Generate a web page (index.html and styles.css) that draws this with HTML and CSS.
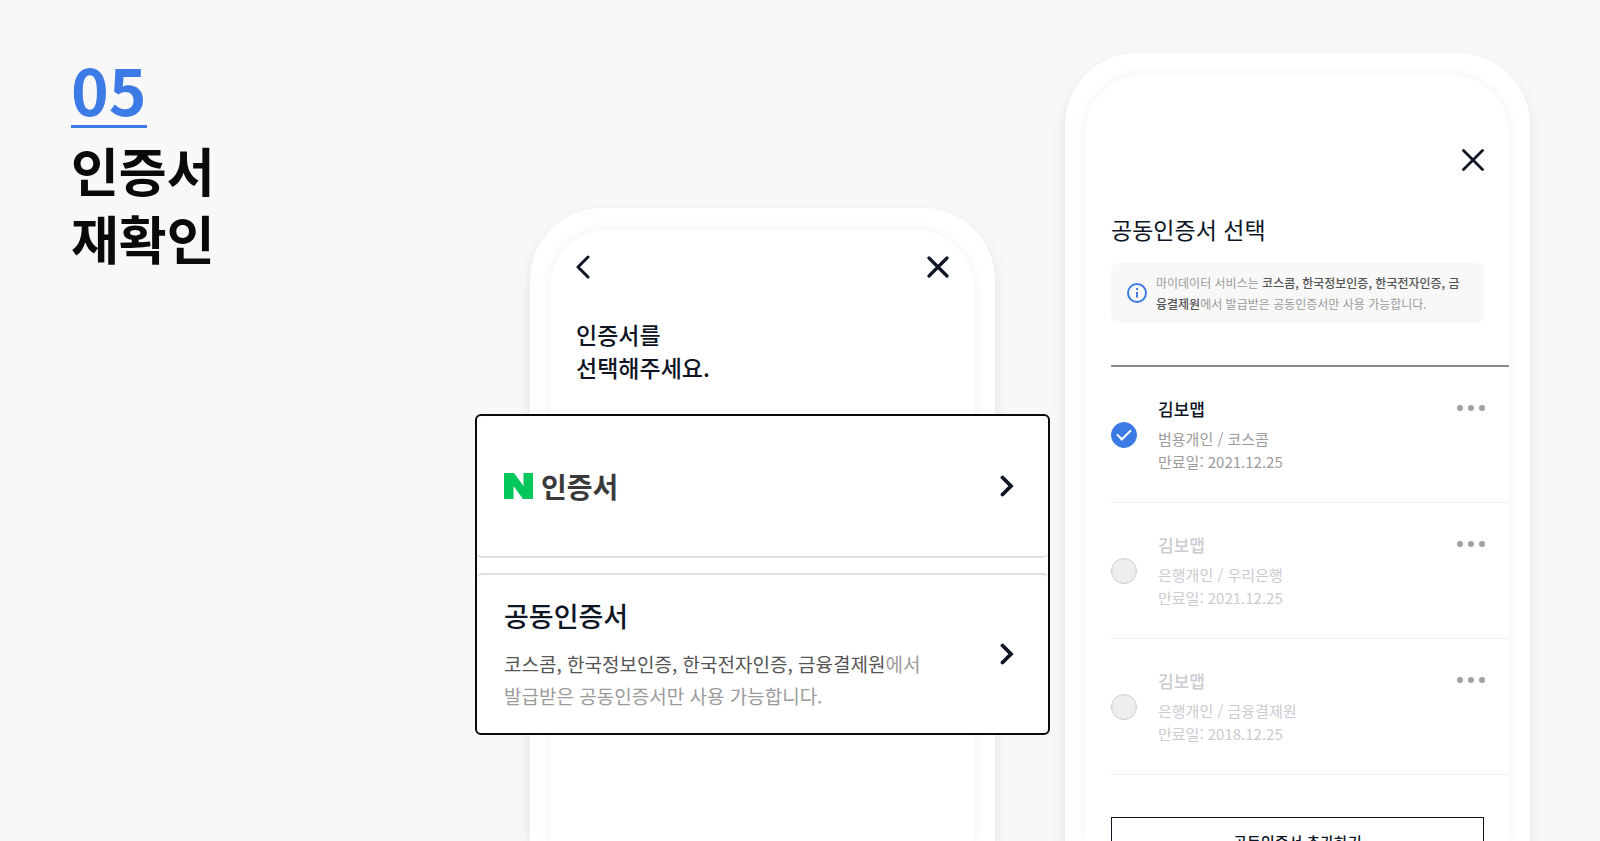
FILE: index.html
```
<!DOCTYPE html>
<html lang="ko">
<head>
    <meta charset="UTF-8">
    <meta name="viewport" content="width=device-width, initial-scale=1.0">
    <title>인증서 재확인</title>
    <link rel="stylesheet" href="styles.css">
</head>
<body>
<main class="scene">
    <header class="step">
        <span class="step-number">05</span>
        <h1 class="step-title">인증서<br>재확인</h1>
    </header>

    <section class="phone phone-select">
        <div class="screen">
            <div class="top-bar">
                <button class="icon-button" type="button" aria-label="뒤로">
                    <svg width="14" height="24" viewBox="0 0 14 24" fill="none" stroke="currentColor" stroke-width="3" stroke-linecap="round" stroke-linejoin="round">
                        <path d="M12 2L2 12l10 10"></path>
                    </svg>
                </button>
                <button class="icon-button" type="button" aria-label="닫기">
                    <svg width="22" height="22" viewBox="0 0 22 22" fill="none" stroke="currentColor" stroke-width="3.2" stroke-linecap="round">
                        <path d="M2 2l18 18M20 2L2 20"></path>
                    </svg>
                </button>
            </div>
            <h2 class="screen-title">인증서를<br>선택해주세요.</h2>

            <nav class="options">
                <a class="option option-naver" href="#">
                    <span class="brand">
                        <svg width="29" height="26" viewBox="0 0 29 26" fill="#03c75a">
                            <path d="M0 0h10l9.500 13V0H29v26H19L9.500 13v13H0z"></path>
                        </svg>
                        인증서
                    </span>
                    <svg class="chevron" width="14" height="22" viewBox="0 0 14 22" fill="none" stroke="currentColor" stroke-width="3.8" stroke-linecap="round">
                        <path d="M2.5 2.5L11 11l-8.500 8.500"></path>
                    </svg>
                </a>
                <a class="option option-joint" href="#">
                    <span class="option-text">
                        <strong class="option-name">공동인증서</strong>
                        <span class="option-desc"><em>코스콤, 한국정보인증, 한국전자인증, 금융결제원</em>에서<br>발급받은 공동인증서만 사용 가능합니다.</span>
                    </span>
                    <svg class="chevron" width="14" height="22" viewBox="0 0 14 22" fill="none" stroke="currentColor" stroke-width="3.8" stroke-linecap="round">
                        <path d="M2.5 2.5L11 11l-8.500 8.500"></path>
                    </svg>
                </a>
            </nav>
        </div>
    </section>

    <section class="phone phone-list">
        <div class="screen">
            <div class="top-bar">
                <button class="icon-button" type="button" aria-label="닫기">
                    <svg width="22" height="22" viewBox="0 0 22 22" fill="none" stroke="currentColor" stroke-width="2.8" stroke-linecap="round">
                        <path d="M1.500 1.500l19 19M20.500 1.500l-19 19"></path>
                    </svg>
                </button>
            </div>
            <h2 class="screen-title">공동인증서 선택</h2>

            <div class="notice">
                <svg class="notice-icon" width="20" height="20" viewBox="0 0 20 20" fill="none" stroke="currentColor" stroke-width="2">
                    <circle cx="10" cy="10" r="9"></circle>
                    <path d="M10 9v5.500M10 5v2"></path>
                </svg>
                <p>마이데이터 서비스는 <em>코스콤, 한국정보인증, 한국전자인증, 금<br>융결제원</em>에서 발급받은 공동인증서만 사용 가능합니다.</p>
            </div>

            <ul class="certs">
                <li class="cert">
                    <input type="radio" name="cert" id="cert1" checked>
                    <label for="cert1">
                        <strong>김보맵</strong>
                        <span>범용개인 / 코스콤</span>
                        <span>만료일: 2021.12.25</span>
                    </label>
                    <button class="more" type="button" aria-label="더보기">
                        <svg width="28" height="6" viewBox="0 0 28 6" fill="currentColor">
                            <circle cx="3" cy="3" r="3"></circle>
                            <circle cx="14" cy="3" r="3"></circle>
                            <circle cx="25" cy="3" r="3"></circle>
                        </svg>
                    </button>
                </li>
                <li class="cert expired">
                    <input type="radio" name="cert" id="cert2">
                    <label for="cert2">
                        <strong>김보맵</strong>
                        <span>은행개인 / 우리은행</span>
                        <span>만료일: 2021.12.25</span>
                    </label>
                    <button class="more" type="button" aria-label="더보기">
                        <svg width="28" height="6" viewBox="0 0 28 6" fill="currentColor">
                            <circle cx="3" cy="3" r="3"></circle>
                            <circle cx="14" cy="3" r="3"></circle>
                            <circle cx="25" cy="3" r="3"></circle>
                        </svg>
                    </button>
                </li>
                <li class="cert expired">
                    <input type="radio" name="cert" id="cert3">
                    <label for="cert3">
                        <strong>김보맵</strong>
                        <span>은행개인 / 금융결제원</span>
                        <span>만료일: 2018.12.25</span>
                    </label>
                    <button class="more" type="button" aria-label="더보기">
                        <svg width="28" height="6" viewBox="0 0 28 6" fill="currentColor">
                            <circle cx="3" cy="3" r="3"></circle>
                            <circle cx="14" cy="3" r="3"></circle>
                            <circle cx="25" cy="3" r="3"></circle>
                        </svg>
                    </button>
                </li>
            </ul>

            <button class="add-button" type="button">공동인증서 추가하기</button>
        </div>
    </section>
</main>
</body>
</html>
```
FILE: styles.css
```
:root {
    --primary-color: #3c7ae6;
    --background-color: #f8f8f8;
    --text-color: #0e1525;
    --muted-color: #9b9b9b;
    --disabled-color: #cbcbd1;
}

* {
    box-sizing: border-box;
}

body {
    margin: 0;
    font-family: "Noto Sans CJK KR", "Noto Sans", sans-serif;
    background-color: var(--background-color);
    color: var(--text-color);
}

h1, h2, p, ul {
    margin: 0;
    padding: 0;
}

em {
    font-style: normal;
}

button {
    font-family: inherit;
    color: inherit;
    background: none;
    border: none;
    padding: 0;
    cursor: pointer;
}

svg {
    display: block;
    flex: none;
}

.scene {
    display: flex;
    gap: 70px;
    height: 100vh;
    padding: 0 70px 0 71px;
    overflow: hidden;
}

/* step heading */
.step {
    flex: 1;
    padding-top: 56px;
}

.step-number {
    display: inline-block;
    padding-bottom: 5px;
    border-bottom: 3px solid var(--primary-color);
    color: var(--primary-color);
    font-size: 64px;
    font-weight: 700;
    line-height: 64px;
}

.step-title {
    margin-top: 8px;
    color: #0a0a0a;
    font-size: 52px;
    font-weight: 700;
    line-height: 68px;
}

/* phones */
.phone {
    flex: none;
    width: 465px;
    padding: 22px 21px 0 20px;
    background-color: white;
    border-radius: 72px 72px 0 0;
    box-shadow: 0 6px 14px rgba(0, 0, 0, 0.09);
}

.phone-select {
    margin-top: 208px;
}

.phone-list {
    margin-top: 53px;
}

.screen {
    height: 100%;
    padding: 0 25px 0 26px;
    background-color: white;
    border-radius: 58px 58px 0 0;
    box-shadow: 0 0 14px rgba(0, 0, 0, 0.06);
}

.top-bar {
    display: flex;
    justify-content: space-between;
    align-items: center;
}

.screen-title {
    font-size: 23px;
    font-weight: 500;
    line-height: 33px;
}

.phone-select .top-bar {
    padding-top: 25px;
}

.phone-select .screen-title {
    margin-top: 39px;
}

.phone-list .top-bar {
    justify-content: flex-end;
    padding-top: 74px;
}

.phone-list .screen-title {
    margin-top: 42px;
    font-weight: 400;
}

/* enlarged options, wider than the phone */
.options {
    display: flex;
    flex-direction: column;
    gap: 15px;
    position: relative;
    margin: 30px -101px 0;
    background-color: white;
    border: 2px solid #0a0a0a;
    border-radius: 6px;
}

.option {
    display: flex;
    justify-content: space-between;
    align-items: center;
    padding: 0 34px 0 27px;
    border: 1px solid #dedede;
    border-radius: 5px;
    color: inherit;
    text-decoration: none;
}

.option-naver {
    height: 142px;
    border-width: 0 0 2px;
}

.option-joint {
    height: 160px;
    border-width: 2px 0 0;
}

.brand {
    display: flex;
    align-items: center;
    gap: 8px;
    color: #3a3a3a;
    font-size: 28px;
    font-weight: 700;
    line-height: 38px;
}

.option-name {
    display: block;
    margin-bottom: 12px;
    font-size: 27px;
    font-weight: 500;
    line-height: 40px;
}

.option-desc {
    display: block;
    color: var(--muted-color);
    font-size: 19px;
    line-height: 32px;
}

.option-desc em {
    color: #555;
}

/* certificate list */
.notice {
    display: flex;
    align-items: center;
    gap: 9px;
    margin-top: 17px;
    padding: 9px 0 9px 16px;
    background-color: var(--background-color);
    border-radius: 8px;
    color: var(--muted-color);
    font-size: 12px;
    line-height: 21px;
    white-space: nowrap;
}

.notice em {
    color: #555;
    font-weight: 500;
}

.notice-icon {
    color: var(--primary-color);
}

.certs {
    margin: 42px -25px 0 0;
    border-top: 2px solid #8c8c8c;
    list-style: none;
}

.cert {
    display: flex;
    align-items: center;
    gap: 21px;
    height: 136px;
    padding-right: 24px;
    border-bottom: 1px solid #eee;
}

.cert input {
    appearance: none;
    flex: none;
    width: 26px;
    height: 26px;
    margin: 0;
    border: 1px solid #ccc;
    border-radius: 50%;
    background-color: #eee;
}

.cert input:checked {
    display: grid;
    place-items: center;
    border-color: var(--primary-color);
    background-color: var(--primary-color);
}

.cert input:checked::before {
    content: "";
    width: 12px;
    height: 6px;
    margin-bottom: 4px;
    border: solid white;
    border-width: 0 0 2px 2px;
    transform: rotate(-45deg);
}

.cert label {
    flex: 1;
    padding-bottom: 2px;
    color: var(--muted-color);
    font-size: 15px;
    line-height: 23px;
}

.cert strong {
    display: block;
    margin-bottom: 4px;
    color: var(--text-color);
    font-size: 17px;
    font-weight: 500;
    line-height: 28px;
}

.cert label span {
    display: block;
}

.cert.expired label,
.cert.expired strong {
    color: var(--disabled-color);
}

.more {
    align-self: flex-start;
    margin-top: 38px;
    color: #a0a0a0;
}

.add-button {
    width: 100%;
    height: 48px;
    margin-top: 42px;
    border: 1px solid var(--text-color);
    font-size: 15px;
    font-weight: 500;
}
```
